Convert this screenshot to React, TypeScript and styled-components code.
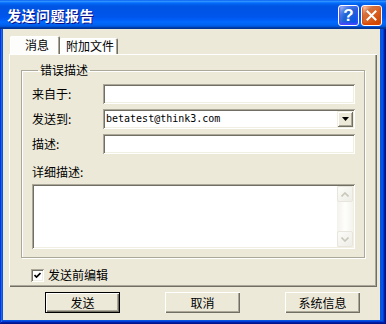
import React from "react";
import styled, { createGlobalStyle } from "styled-components";

const GlobalStyle = createGlobalStyle`
  html, body { margin: 0; padding: 0; background: #ece9d8; }
  body {
    font-family: "Noto Sans CJK SC", "Liberation Sans", sans-serif;
    font-size: 12px;
    color: #000;
  }
  * { box-sizing: border-box; }
`;

const Window = styled.div`
  width: 386px;
  height: 324px;
  display: flex;
  flex-direction: column;
  background: #0855dd;
  box-shadow: inset -1px -1px #00138c, inset 1px 1px #0831d9,
    inset -2px -2px #001ea0, inset 2px 2px #166aee, inset -3px -3px #003bda,
    inset 3px 3px #0855dd;
`;

const TitleBar = styled.div`
  height: 29px;
  flex: none;
  display: flex;
  align-items: center;
  justify-content: space-between;
  padding: 1px 4px 0 7px;
  background: linear-gradient(
    to bottom,
    #0058ee 0%,
    #3593ff 4%,
    #288eff 6%,
    #127dff 8%,
    #036ffc 10%,
    #0262ee 14%,
    #0057e5 20%,
    #0054e3 24%,
    #0055eb 56%,
    #005bf5 66%,
    #026afe 76%,
    #0062ef 86%,
    #0052d6 92%,
    #0040ab 94%,
    #003092 100%
  );
`;

const Title = styled.div`
  color: #fff;
  font-weight: bold;
  font-size: 14px;
  line-height: 16px;
  letter-spacing: 0.5px;
  text-shadow: 1px 1px #0f1089;
`;

const TitleButtons = styled.div`
  display: flex;
  gap: 2px;
`;

const CaptionButton = styled.div<{ $variant: "help" | "close" }>`
  width: 21px;
  height: 21px;
  border: 1px solid #fff;
  border-radius: 3px;
  display: flex;
  align-items: center;
  justify-content: center;
  background: ${(p) =>
    p.$variant === "close"
      ? "radial-gradient(circle at 90% 90%, #cc4600 0%, #dc6527 55%, #cd7546 70%, #ffccb2 90%, #fff 100%)"
      : "radial-gradient(circle at 90% 90%, #0054e9 0%, #2263d5 55%, #4479e4 70%, #a3bbec 90%, #fff 100%)"};
  box-shadow: ${(p) =>
    p.$variant === "close"
      ? "inset 0 -1px 2px 1px #da4600"
      : "inset 0 -1px 2px 1px #4646ff"};
`;

const HelpGlyph = styled.span`
  color: #fff;
  font-family: "Liberation Sans", sans-serif;
  font-weight: bold;
  font-size: 17px;
  line-height: 17px;
  margin-top: 1px;
`;

const Client = styled.div`
  flex: 1;
  margin: 0 6px 4px 3px;
  background: #ece9d8;
  padding: 7px 3px 7px 6px;
  display: flex;
  flex-direction: column;
`;

const TabStrip = styled.div`
  height: 18px;
  display: flex;
  align-items: flex-end;
  padding-left: 1px;
`;

const Tab = styled.div<{ $active?: boolean; $w: number }>`
  width: ${(p) => p.$w}px;
  height: ${(p) => (p.$active ? 18 : 16)}px;
  background: #fdfdfc;
  border-radius: 2px 2px 0 0;
  box-shadow: inset 1px 1px #fff, inset -1px 0 #716f64, inset -2px 0 #aca899,
    inset 0 1px #f1efe2;
  display: flex;
  align-items: center;
  justify-content: center;
  padding-left: ${(p) => (p.$active ? 4 : 2)}px;
  line-height: 14px;
`;

const TabPanel = styled.div`
  flex: 1;
  display: flex;
  flex-direction: column;
  padding: 9px 12px 0 12px;
  box-shadow: inset 1px 1px #fff, inset -1px -1px #716f64,
    inset -2px -2px #aca899;
`;

const GroupBox = styled.fieldset`
  margin: 0;
  padding: 0 9px 8px 10px;
  min-width: 0;
  border: 1px solid #aca899;
  box-shadow: inset 1px 1px #fff, 1px 1px #fff;
`;

const Legend = styled.legend`
  margin-left: 6px;
  padding: 0 2px;
  line-height: 14px;
`;

const Fields = styled.div`
  display: flex;
  flex-direction: column;
  gap: 5px;
  padding-top: 7px;
`;

const FieldRow = styled.div`
  display: flex;
  align-items: center;
  height: 20px;
`;

const FieldLabel = styled.label`
  width: 71px;
  flex: none;
  line-height: 14px;
`;

const sunken = `
  background: #fff;
  box-shadow: inset 1px 1px #aca899, inset -1px -1px #fff,
    inset 2px 2px #716f64, inset -2px -2px #f1efe2;
`;

const TextBox = styled.input`
  flex: 1;
  height: 20px;
  border: none;
  outline: none;
  margin: 0;
  padding: 0 3px;
  font: inherit;
  ${sunken}
`;

const Combo = styled.div`
  flex: 1;
  height: 20px;
  display: flex;
  align-items: center;
  padding: 2px 2px 2px 3px;
  ${sunken}
`;

const ComboText = styled.span`
  flex: 1;
  font-family: "DejaVu Sans Mono", "Liberation Mono", monospace;
  font-size: 10px;
  line-height: 14px;
  letter-spacing: 0px;
`;

const DropButton = styled.div`
  width: 16px;
  height: 16px;
  background: #ece9d8;
  display: flex;
  align-items: center;
  justify-content: center;
  box-shadow: inset 1px 1px #f1efe2, inset -1px -1px #716f64,
    inset 2px 2px #fff, inset -2px -2px #aca899;
`;

const DetailLabel = styled.div`
  margin-top: 11px;
  margin-bottom: 5px;
  line-height: 14px;
`;

const TextArea = styled.div`
  height: 65px;
  display: flex;
  justify-content: flex-end;
  padding: 2px;
  ${sunken}
`;

const ScrollBar = styled.div`
  width: 16px;
  display: flex;
  flex-direction: column;
  justify-content: space-between;
  background: linear-gradient(to right, #f3f1ec 0%, #fefefb 50%, #f4f3ee 100%);
`;

const ScrollArrow = styled.div`
  width: 16px;
  height: 16px;
  border: 1px solid #e8e6dc;
  border-radius: 2px;
  background: linear-gradient(to bottom right, #fbfbf8, #eeede6);
  display: flex;
  align-items: center;
  justify-content: center;
`;

const CheckRow = styled.label`
  display: flex;
  align-items: center;
  gap: 4px;
  margin: 10px 0 0 10px;
  line-height: 14px;
`;

const CheckBox = styled.span`
  width: 13px;
  height: 13px;
  display: flex;
  align-items: center;
  justify-content: center;
  ${sunken}
`;

const ButtonRow = styled.div`
  margin-top: 5px;
  height: 21px;
  display: flex;
  gap: 45px;
  padding-left: 36px;
`;

const DialogButton = styled.button<{ $default?: boolean }>`
  width: 75px;
  height: 21px;
  margin: 0;
  padding: 0;
  border: none;
  font: inherit;
  color: #000;
  background: #ece9d8;
  line-height: 14px;
  box-shadow: ${(p) =>
    p.$default
      ? "inset 0 0 0 1px #000, inset 2px 2px #fff, inset -2px -2px #716f64, inset -3px -3px #aca899"
      : "inset 1px 1px #fff, inset -1px -1px #716f64, inset -2px -2px #aca899"};
`;

export default function App() {
  return (
    <>
      <GlobalStyle />
      <Window>
        <TitleBar>
          <Title>发送问题报告</Title>
          <TitleButtons>
            <CaptionButton $variant="help">
              <HelpGlyph>?</HelpGlyph>
            </CaptionButton>
            <CaptionButton $variant="close">
              <svg width="11" height="11" viewBox="0 0 11 11">
                <path
                  d="M1.5 1.5 L9.5 9.5 M9.5 1.5 L1.5 9.5"
                  stroke="#fff"
                  strokeWidth="2"
                  strokeLinecap="square"
                />
              </svg>
            </CaptionButton>
          </TitleButtons>
        </TitleBar>
        <Client>
          <TabStrip>
            <Tab $active $w={50}>消息</Tab>
            <Tab $w={58}>附加文件</Tab>
          </TabStrip>
          <TabPanel>
            <GroupBox>
              <Legend>错误描述</Legend>
              <Fields>
                <FieldRow>
                  <FieldLabel>来自于:</FieldLabel>
                  <TextBox defaultValue="" />
                </FieldRow>
                <FieldRow>
                  <FieldLabel>发送到:</FieldLabel>
                  <Combo>
                    <ComboText>betatest@think3.com</ComboText>
                    <DropButton>
                      <svg width="7" height="4" viewBox="0 0 7 4">
                        <path d="M0 0 H7 L3.5 4 Z" fill="#000" />
                      </svg>
                    </DropButton>
                  </Combo>
                </FieldRow>
                <FieldRow>
                  <FieldLabel>描述:</FieldLabel>
                  <TextBox defaultValue="" />
                </FieldRow>
              </Fields>
              <DetailLabel>详细描述:</DetailLabel>
              <TextArea>
                <ScrollBar>
                  <ScrollArrow>
                    <svg width="8" height="5" viewBox="0 0 8 5">
                      <path d="M0.5 4.5 L4 1 L7.5 4.5" fill="none" stroke="#c9c7ba" strokeWidth="1.6" />
                    </svg>
                  </ScrollArrow>
                  <ScrollArrow>
                    <svg width="8" height="5" viewBox="0 0 8 5">
                      <path d="M0.5 0.5 L4 4 L7.5 0.5" fill="none" stroke="#c9c7ba" strokeWidth="1.6" />
                    </svg>
                  </ScrollArrow>
                </ScrollBar>
              </TextArea>
            </GroupBox>
            <CheckRow>
              <CheckBox>
                <svg width="7" height="7" viewBox="0 0 7 7">
                  <path d="M0.5 3 L2.5 5 L6.5 1" fill="none" stroke="#000" strokeWidth="1.7" />
                </svg>
              </CheckBox>
              发送前编辑
            </CheckRow>
          </TabPanel>
          <ButtonRow>
            <DialogButton $default>发送</DialogButton>
            <DialogButton>取消</DialogButton>
            <DialogButton>系统信息</DialogButton>
          </ButtonRow>
        </Client>
      </Window>
    </>
  );
}
